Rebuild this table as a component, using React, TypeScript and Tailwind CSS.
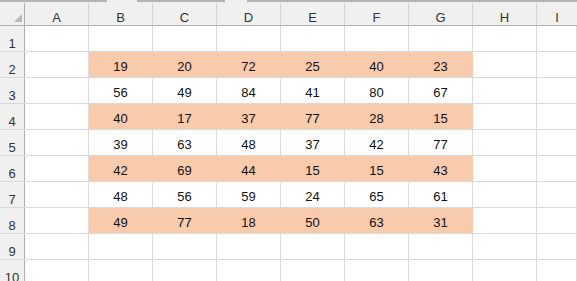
import React from "react";

const cols = ["A", "B", "C", "D", "E", "F", "G", "H", "I"];

const data: Record<number, number[]> = {
  2: [19, 20, 72, 25, 40, 23],
  3: [56, 49, 84, 41, 80, 67],
  4: [40, 17, 37, 77, 28, 15],
  5: [39, 63, 48, 37, 42, 77],
  6: [42, 69, 44, 15, 15, 43],
  7: [48, 56, 59, 24, 65, 61],
  8: [49, 77, 18, 50, 63, 31],
};

const shaded = [2, 4, 6, 8];

function Cell({ col, row }: { col: number; row: number }) {
  const vals = data[row];
  const inData = col >= 1 && col <= 6;
  const value = vals && inData ? vals[col - 1] : null;
  const orange = shaded.includes(row) && inData;
  const last = col === cols.length - 1;
  return (
    <div
      className={`flex h-full shrink-0 items-end justify-center pb-[3px] text-[13px] leading-[15px] text-[#111] ${
        last ? "flex-1" : "w-[64px]"
      } ${orange ? "border-r border-[#f8cbad] bg-[#f8cbad]" : "border-r border-[#dadada]"}`}
    >
      {value}
    </div>
  );
}

export default function App() {
  const rows = Array.from({ length: 10 }, (_, i) => i + 1);
  return (
    <div
      className="h-[281px] w-[577px] overflow-hidden bg-white"
      style={{ fontFamily: '"Liberation Sans", Arial, sans-serif' }}
    >
      {/* strip left over from the ribbon / formula bar */}
      <div className="flex h-[3px] bg-[#f0f0f0]">
        <div className="h-[2px] w-[107px] bg-[#b4b4b4]" />
        <div className="w-[30px]" />
        <div className="h-[2px] w-[88px] bg-[#b4b4b4]" />
        <div className="w-[22px]" />
        <div className="h-[2px] flex-1 bg-[#b4b4b4]" />
      </div>

      {/* column headers */}
      <div className="flex h-[23px] border-b border-[#b0b0b0] bg-[#f0f0f0]">
        <div className="relative w-[25px] shrink-0 border-r border-[#b0b0b0]">
          <svg className="absolute bottom-[3px] right-[2px]" width="8" height="8" viewBox="0 0 8 8">
            <polygon points="8,0 8,8 0,8" fill="#b8b8b8" />
          </svg>
        </div>
        {cols.map((c, i) => (
          <div
            key={c}
            className={`flex shrink-0 items-end justify-center text-[13px] leading-[15px] text-[#333] ${
              i === cols.length - 1 ? "flex-1" : "w-[64px] border-r border-[#d4d4d4]"
            }`}
          >
            {c}
          </div>
        ))}
      </div>

      {/* rows */}
      {rows.map((r) => (
        <div
          key={r}
          className={`flex h-[26px] border-b ${
            shaded.includes(r) ? "border-[#dadada]" : "border-[#dadada]"
          }`}
        >
          <div className="flex w-[25px] shrink-0 items-end justify-center border-r border-[#b0b0b0] bg-[#f0f0f0] text-[13px] leading-[15px] text-[#333]">
            {r}
          </div>
          {cols.map((c, i) => (
            <Cell key={c} col={i} row={r} />
          ))}
        </div>
      ))}
    </div>
  );
}
